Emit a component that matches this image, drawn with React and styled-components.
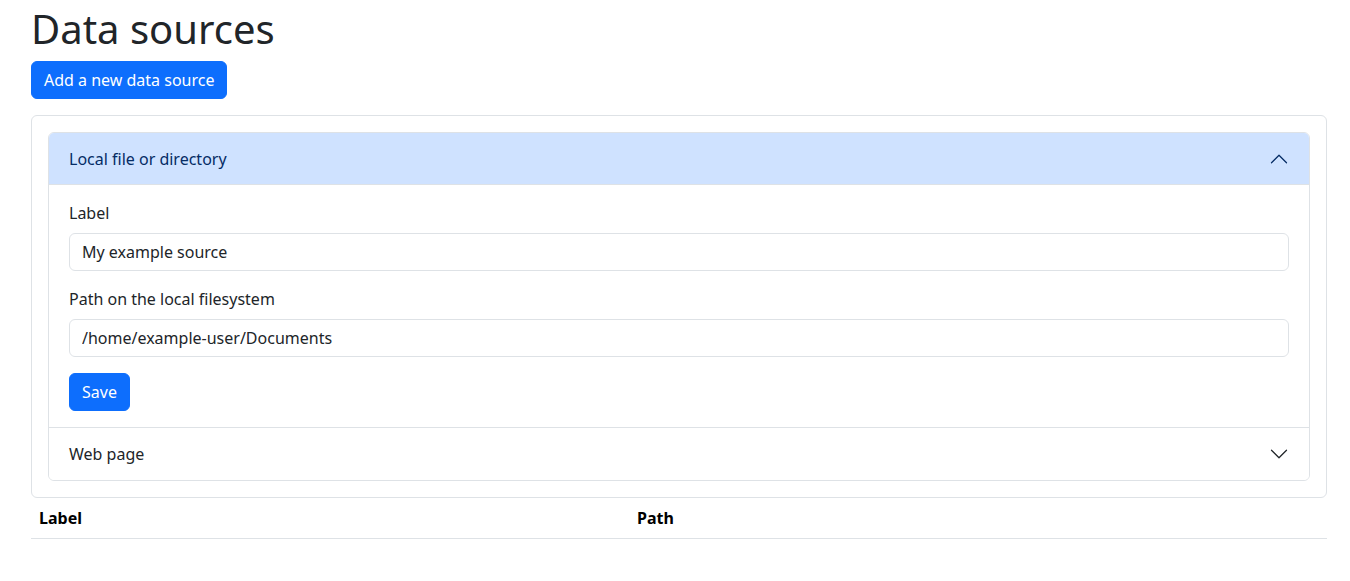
import React, { useState } from "react";
import styled, { createGlobalStyle } from "styled-components";

const GlobalStyle = createGlobalStyle`
  html, body {
    margin: 0;
    padding: 0;
    background: #fff;
  }
  body {
    font-family: "Noto Sans", "Open Sans", sans-serif;
    font-size: 16px;
    line-height: 1.5;
    color: #212529;
  }
  * { box-sizing: border-box; }
`;

const Page = styled.div`
  width: 1296px;
  margin-left: 31px;
  padding-top: 5px;
`;

const Title = styled.h1`
  margin: 0 0 8px 0;
  font-size: 40px;
  font-weight: 400;
  line-height: 1.2;
`;

const Button = styled.button`
  display: inline-block;
  font-family: inherit;
  font-size: 16px;
  line-height: 24px;
  padding: 6px 12px;
  color: #fff;
  background-color: #0d6efd;
  border: 1px solid #0d6efd;
  border-radius: 6px;
  cursor: pointer;
`;

const Card = styled.div`
  margin-top: 16px;
  border: 1px solid #dee2e6;
  border-radius: 6px;
  padding: 16px;
`;

const Accordion = styled.div`
  border: 1px solid #dee2e6;
  border-radius: 6px;
  overflow: hidden;
`;

const Item = styled.div`
  & + & {
    border-top: 1px solid #dee2e6;
  }
`;

const Header = styled.button`
  display: flex;
  align-items: center;
  justify-content: space-between;
  width: 100%;
  padding: 14px 20px;
  font-family: inherit;
  font-size: 16px;
  line-height: 24px;
  text-align: left;
  border: 0;
  cursor: pointer;
  color: ${(p) => (p.$open ? "#052c65" : "#212529")};
  background: ${(p) => (p.$open ? "#cfe2ff" : "#fff")};
  box-shadow: ${(p) => (p.$open ? "inset 0 -1px 0 #dee2e6" : "none")};
`;

const Chevron = styled.svg`
  width: 20px;
  height: 20px;
  flex-shrink: 0;
  transform: ${(p) => (p.$open ? "rotate(-180deg)" : "none")};
`;

const Body = styled.div`
  padding: 16px 20px;
`;

const Field = styled.div`
  margin-bottom: 16px;
`;

const Label = styled.label`
  display: block;
  margin-bottom: 8px;
`;

const Input = styled.input`
  display: block;
  width: 100%;
  padding: 6px 12px;
  font-family: inherit;
  font-size: 16px;
  line-height: 24px;
  color: #212529;
  border: 1px solid #dee2e6;
  border-radius: 6px;
  outline: none;
`;

const Table = styled.div`
  display: grid;
  grid-template-columns: 598px 1fr;
  border-bottom: 1px solid #dee2e6;
`;

const Th = styled.div`
  padding: 8px;
  font-weight: 700;
  color: #000;
`;

const ChevronIcon = ({ open }) => (
  <Chevron $open={open} viewBox="0 0 16 16" fill="none"
    stroke={open ? "#052c65" : "#212529"} strokeLinecap="round" strokeLinejoin="round">
    <path d="M2 5L8 11L14 5" />
  </Chevron>
);

const App = () => {
  const [open, setOpen] = useState(0);

  return (
    <>
      <GlobalStyle />
      <Page>
        <Title>Data sources</Title>
        <Button>Add a new data source</Button>
        <Card>
          <Accordion>
            <Item>
              <Header $open={open === 0} onClick={() => setOpen(open === 0 ? -1 : 0)}>
                Local file or directory
                <ChevronIcon open={open === 0} />
              </Header>
              {open === 0 && (
                <Body>
                  <Field>
                    <Label>Label</Label>
                    <Input defaultValue="My example source" />
                  </Field>
                  <Field>
                    <Label>Path on the local filesystem</Label>
                    <Input defaultValue="/home/example-user/Documents" />
                  </Field>
                  <Button>Save</Button>
                </Body>
              )}
            </Item>
            <Item>
              <Header $open={open === 1} onClick={() => setOpen(open === 1 ? -1 : 1)}>
                Web page
                <ChevronIcon open={open === 1} />
              </Header>
            </Item>
          </Accordion>
        </Card>
        <Table>
          <Th>Label</Th>
          <Th>Path</Th>
        </Table>
      </Page>
    </>
  );
};

export default App;
